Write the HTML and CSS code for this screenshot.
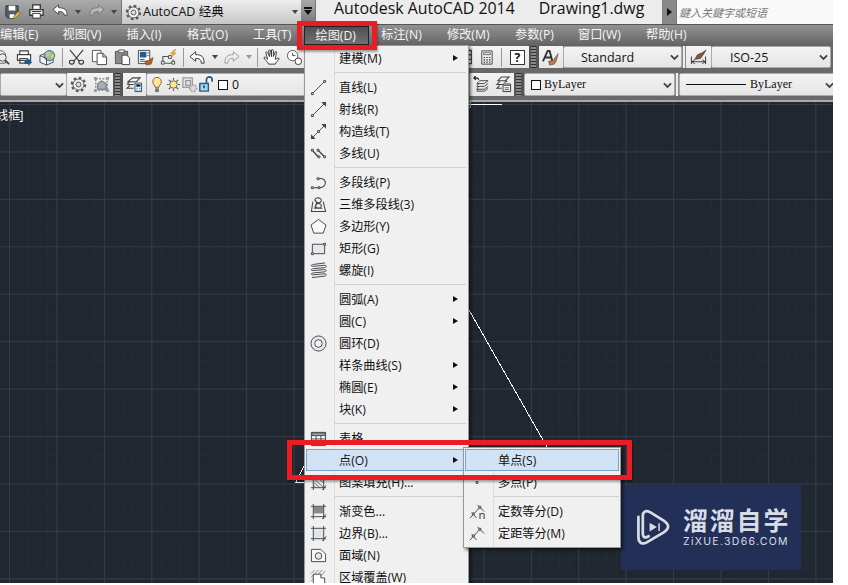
FILE: index.html
```html
<!DOCTYPE html>
<html lang="zh-CN">
<head>
    <meta charset="UTF-8">
    <meta name="viewport" content="width=device-width, initial-scale=1.0">
    <title>Autodesk AutoCAD 2014</title>
    <link rel="stylesheet" href="styles.css">
</head>
<body>
    <div class="app">
        <header class="titlebar">
            <div class="quick">
                <svg class="icon" viewBox="0 0 18 18"><path d="M2 3h13v9l-4 4H4l-2-2z" fill="#555e68" stroke="#303640"/><path d="M5 3h7v5H5zM6 12h5v4H6z" fill="#fff"/><path d="M10 15l5-6 2 2-5 5-3 1z" fill="#f0c64b" stroke="#6b5420" stroke-width=".7"/></svg>
                <svg class="icon" viewBox="0 0 18 18"><path d="M5 6V2h8v4M2 7h14v6H2z" fill="#fff" stroke="#333" stroke-width="1.4"/><path d="M5 11h8v5H5z" fill="#fff" stroke="#333"/><path d="M4 9h10" stroke="#333"/></svg>
                <svg class="icon" viewBox="0 0 18 18"><path d="M1 7l6-5v3c6 0 9 2 9 8h-3c0-3-2-4-6-4v3z" fill="#fff" stroke="#444"/></svg>
                <i class="caret"></i>
                <svg class="icon" viewBox="0 0 18 18"><path d="M17 7l-6-5v3C5 5 2 7 2 13h3c0-3 2-4 6-4v3z" fill="#bbb" stroke="#777"/></svg>
                <i class="caret"></i>
            </div>
            <div class="workspace">
                <svg class="icon" viewBox="0 0 18 18"><circle cx="9" cy="9" r="7" fill="none" stroke="#555" stroke-width="2.4" stroke-dasharray="2.75 2.75"/><circle cx="9" cy="9" r="5.8" fill="#eee" stroke="#555"/><circle cx="9" cy="9" r="2.6" fill="#ddd" stroke="#555"/></svg>
                <span>AutoCAD 经典</span>
                <i class="caret"></i>
            </div>
            <div class="more"><i class="caret"></i></div>
            <div class="caption"><span>Autodesk AutoCAD 2014</span><span>Drawing1.dwg</span></div>
            <div class="expand"><i></i></div>
            <div class="search">鍵入关鍵字或短语</div>
        </header>

        <nav class="menubar">
            <span>编辑(E)</span>
            <span>视图(V)</span>
            <span>插入(I)</span>
            <span>格式(O)</span>
            <span>工具(T)</span>
            <span class="open">绘图(D)</span>
            <span>标注(N)</span>
            <span>修改(M)</span>
            <span>参数(P)</span>
            <span>窗口(W)</span>
            <span>帮助(H)</span>
        </nav>

        <div class="toolbar standard">
            <div class="tools">
                <svg class="icon" viewBox="0 0 18 18"><path d="M1 2h9l3 3v10H1z" fill="#fff" stroke="#555"/><circle cx="10" cy="9" r="4" fill="#e4edf5" stroke="#444"/><path d="M13 12l4 4" stroke="#444" stroke-width="2"/></svg>
                <svg class="icon" viewBox="0 0 18 18"><path d="M4 6V2h9v4M1.5 6h14v6h-14zM4 10h8v5H4z" fill="#fff" stroke="#444" stroke-width="1.2"/><path d="M9 12h4v-2l4 4-4 4v-2H9z" fill="#1b5c92"/></svg>
                <svg class="icon" viewBox="0 0 18 18"><path d="M1 7l7-3 7 3v7l-7 3-7-3z" fill="#eef3f6" stroke="#445"/><circle cx="11" cy="7" r="5.5" fill="#86b8d0" stroke="#3c6b87"/><path d="M8 3l4 1-1 3-3 2zM12 7l3-2 1 3-3 3z" fill="#e8c94c"/><path d="M1 7l7 3v7" fill="none" stroke="#445"/></svg>
                <i class="sep"></i>
                <svg class="icon" viewBox="0 0 18 18"><path d="M2 1l10 12M16 1L6 13" stroke="#444" stroke-width="1.3"/><ellipse cx="4" cy="14" rx="2.5" ry="2" fill="none" stroke="#333" stroke-width="1.1"/><ellipse cx="14" cy="14" rx="2.5" ry="2" fill="none" stroke="#333" stroke-width="1.1"/></svg>
                <svg class="icon" viewBox="0 0 18 18"><path d="M1.5 1.5h9v12h-9z" fill="#fff" stroke="#555"/><path d="M6.5 4.500h6l4 4v8h-10zM12.500 4.500v4h4" fill="#fff" stroke="#444"/></svg>
                <svg class="icon" viewBox="0 0 18 18"><path d="M1.500 2.500h13v13h-13z" fill="#8b8b85" stroke="#555"/><path d="M5 1h6v3H5z" fill="#eee" stroke="#555"/><path d="M8.500 6.500h5l3 3v7h-8z" fill="#fff" stroke="#444"/></svg>
                <svg class="icon" viewBox="0 0 18 18"><path d="M1.500 1.500h12v14h-12z" fill="#fff" stroke="#444"/><path d="M3 3h7v6H3z" fill="#225c92"/><path d="M11 4h1.500M11 7h1.500M3 11h5M3 13h5" stroke="#444"/><path d="M17 9l-4 3-5 1 2 4 5-1 1-3z" fill="#b65e33" stroke="#74401f" stroke-width=".7"/></svg>
                <svg class="icon" viewBox="0 0 18 18"><path d="M3 14V8h7M5 15h9v-4" fill="none" stroke="#555" stroke-width="1.100"/><path d="M1.500 13h3v3h-3zM12.500 13h3v3h-3zM9 7h3v3H9z" fill="#fff" stroke="#444"/><path d="M16 0l-5 5h3l-2 4 5-5h-3l3-4z" fill="#f6b324" stroke="#b77a10" stroke-width=".5"/></svg>
                <i class="sep"></i>
                <svg class="icon" viewBox="0 0 18 18"><path d="M1 8l6-5v3c6 0 9 2 9 9h-3c0-4-2-5-6-5v3z" fill="#fff" stroke="#333"/></svg>
                <i class="caret"></i>
                <svg class="icon" viewBox="0 0 18 18"><path d="M17 8l-6-5v3C5 6 2 8 2 15h3c0-4 2-5 6-5v3z" fill="#eee" stroke="#999"/></svg>
                <i class="caret dim"></i>
                <i class="sep"></i>
                <svg class="icon" viewBox="0 0 18 18"><path d="M6 16c-1-3-5-5-5-7 1-1 2 0 4 2L3 4c0-1 1-2 2 0l2 4-1-6c1-2 2-1 2 0l1 6V1c1-1 2 0 2 1v6l2-5c1-1 2 0 1 2l-1 6c1 0 3-2 4-1 0 2-3 3-4 6z" fill="#fff" stroke="#333"/></svg>
                <svg class="icon" viewBox="0 0 18 18"><circle cx="7" cy="7" r="5.500" fill="#fff" stroke="#555"/><path d="M7 4v3h3" fill="none" stroke="#444"/><circle cx="13" cy="13" r="3.500" fill="#fff" stroke="#333"/></svg>
            </div>
            <div class="tools after-menu">
                <svg class="icon" viewBox="0 0 18 18"><path d="M6.500 1.500h11v14h-11zM6 6h11M6 11h11" fill="#fff" stroke="#444" stroke-width="1.500"/></svg>
                <svg class="icon" viewBox="0 0 18 18"><path d="M4 2h11v14H4z" fill="#eee" stroke="#444"/><path d="M6 4h7v2H6z" fill="#fff" stroke="#444" stroke-width=".8"/><path d="M6 9h8M6 11.500h8M6 14h8" stroke="#333" stroke-width="1.300" stroke-dasharray="1.500 1.300"/></svg>
                <i class="sep"></i>
                <span class="help">?</span>
            </div>
            <i class="grip"></i>
            <div class="tools style">
                <svg class="icon" viewBox="0 0 18 18"><path d="M1 13L6 2h2l3 11M3.500 9h6" fill="none" stroke="#333" stroke-width="2"/><path d="M17 5l-5 7-5 1 1 4 5-1 2-3z" fill="#b77a52" stroke="#704226" stroke-width=".7"/></svg>
            </div>
            <div class="combo text-style">Standard<svg class="chev" viewBox="0 0 10 8"><path d="M1 1l4 4 4-4"/></svg></div>
            <i class="double"></i>
            <div class="tools dimension">
                <svg class="icon" viewBox="0 0 18 18"><path d="M1.500 8v8M16.500 8v8M2 13.500h14M5 11.500l-3 2 3 2M13 11.500l3 2-3 2" fill="none" stroke="#333"/><path d="M17 1l-4 3-5 2-3 5 6-1 3-4z" fill="#82553b" stroke="#50301e" stroke-width=".7"/></svg>
            </div>
            <div class="combo dim-style">ISO-25<svg class="chev" viewBox="0 0 10 8"><path d="M1 1l4 4 4-4"/></svg></div>
        </div>

        <div class="toolbar layers">
            <div class="combo layer-state"><svg class="chev" viewBox="0 0 10 8"><path d="M1 1l4 4 4-4"/></svg></div>
            <div class="tools layer-tools">
                <svg class="icon" viewBox="0 0 18 18"><circle cx="9" cy="9" r="7" fill="none" stroke="#555" stroke-width="2.400" stroke-dasharray="2.750 2.750"/><circle cx="9" cy="9" r="5.800" fill="#eee" stroke="#555"/><circle cx="9" cy="9" r="2.600" fill="#ddd" stroke="#555"/></svg>
                <svg class="icon" viewBox="0 0 18 18"><path d="M3 3h12v12H3z" fill="none" stroke="#555" stroke-dasharray="2 1.500"/><path d="M5 8l4-3 5 3v6H5z" fill="#a3adb8" stroke="#667"/><path d="M1 1h3v3H1zM14 1h3v3h-3zM1 14h3v3H1zM14 14h3v3h-3z" fill="#999"/></svg>
            </div>
            <i class="grip"></i>
            <div class="tools layer-manager">
                <svg class="icon" viewBox="0 0 18 18"><path d="M7 2h8l-4 4H2zM2 9h6M4 6L1 9M4 10l-3 3h7" fill="none" stroke="#444" stroke-width="1.100"/><path d="M9.500 7.500h7v9h-7z" fill="#fff" stroke="#345"/><path d="M11 9h4v2h-4zM11 13h1.500M14 13h1.500M11 15h1.500M14 15h1.500" stroke="#37729f"/></svg>
            </div>
            <div class="combo layer">
                <svg class="icon" viewBox="0 0 18 18"><path d="M6.500 12c0-2-2.500-3-2.500-6 0-6 9-6 9 0 0 3-2.500 4-2.500 6z" fill="#ffe694" stroke="#776238"/><path d="M6.500 13h4v4h-4z" fill="#777"/></svg>
                <svg class="icon" viewBox="0 0 18 18"><path d="M9 2v2M9 14v2M2 9h2M14 9h2M4 4l2 2M12 12l2 2M4 14l2-2M12 6l2-2" stroke="#555" stroke-width="1.200"/><circle cx="9" cy="9" r="4" fill="#ffe694" stroke="#665d43"/></svg>
                <svg class="icon" viewBox="0 0 18 18"><path d="M2 2h10v10H2zM5 5h5v5H5z" fill="#e6e6e6" stroke="#999" stroke-width="1.300"/><circle cx="13" cy="13" r="3.500" fill="#ddd" stroke="#aaa" stroke-width="2" stroke-dasharray="2 1"/></svg>
                <svg class="icon" viewBox="0 0 18 18"><path d="M10 8V4c0-4 6-4 6 0v2" fill="none" stroke="#245d7d" stroke-width="1.800"/><path d="M3 8h9v8H3z" fill="#a9d7ef" stroke="#245d7d" stroke-width="1.500"/><path d="M7.500 10v3" stroke="#245d7d" stroke-width="2"/></svg>
                <i class="swatch"></i>
                <span>0</span>
            </div>
            <div class="tools layer-right">
                <svg class="icon" viewBox="0 0 18 18"><path d="M7 5h9l-4 3H4zM6 8l-2 3h8l4-3M6 11l-2 3h8l4-3M6 14l-2 2h8l4-3" fill="none" stroke="#444"/><path d="M6 4C6 2 4 2 1 2l2-2M1 2l2 2" fill="none" stroke="#222" stroke-width="1.300"/></svg>
                <svg class="icon" viewBox="0 0 18 18"><path d="M7 1h8l-4 4H3zM5 6L2 9h7M5 10l-3 3h5M13 5l-3 2" fill="none" stroke="#444" stroke-width="1.100"/><path d="M8.500 8.500h8v8h-8z" fill="#fff" stroke="#333"/><path d="M9 10h7M10 12.500h5M10 14.500h5" stroke="#375a78"/></svg>
            </div>
            <i class="grip"></i>
            <div class="combo color"><i class="swatch"></i>ByLayer<svg class="chev" viewBox="0 0 10 8"><path d="M1 1l4 4 4-4"/></svg></div>
            <i class="double"></i>
            <div class="combo linetype"><i class="stroke"></i>ByLayer<svg class="chev" viewBox="0 0 10 8"><path d="M1 1l4 4 4-4"/></svg></div>
        </div>

        <main class="canvas">
            <div class="view-label">线框<span>]</span></div>
            <svg class="drawing" viewBox="0 102 833 481" shape-rendering="crispEdges">
                <path d="M469 310L547 447M469 104h33M296 482l8-16M295 482h9" fill="none" stroke="#fff"/>
                <path d="M466.500 102.500h4v5h-4z" fill="none" stroke="#aaa"/>
            </svg>
        </main>

        <div class="watermark">
            <svg viewBox="0 0 36 38"><path d="M2.500 8v21c0 6 4 8 9 5l17-10c6-4 6-8 0-12L14 3C10 1 7 3 7 7v18c0 5 3 5 6 3" fill="none" stroke="#d9dce4" stroke-width="2.800" stroke-linecap="round"/><path d="M14 14l7.500 4.500-7.500 4.500zM23 14.500h1.500v8H23z" fill="#d9dce4"/></svg>
            <div><b>溜溜自学</b><span>ZiXUE.3D66.COM</span></div>
        </div>

        <div class="menu draw-menu">
            <div class="item more-items"><span>建模(M)</span></div>
            <hr>
            <div class="item"><svg class="icon" viewBox="0 0 18 18"><path d="M3 15L15 3"/><path class="node" d="M1.500 14.500h2v2h-2zM14.500 1.500h2v2h-2z"/></svg><span>直线(L)</span></div>
            <div class="item"><svg class="icon" viewBox="0 0 18 18"><path d="M3 15L15 3"/><path class="node" d="M1.500 14.500h2v2h-2z"/><path class="solid" d="M12 1h5v5z"/></svg><span>射线(R)</span></div>
            <div class="item"><svg class="icon" viewBox="0 0 18 18"><path d="M3 15L15 3"/><path class="node" d="M8 8h2v2H8z"/><path class="solid" d="M12 1h5v5zM1 12v5h5z"/></svg><span>构造线(T)</span></div>
            <div class="item"><svg class="icon" viewBox="0 0 18 18"><path d="M2 5l7 8M8 5l8 8" stroke-width="1.400"/><path class="node" d="M1.500 4.500h2v2h-2zM7.500 4.500h2v2h-2zM8.500 11.500h2v2h-2zM14.500 11.500h2v2h-2z"/></svg><span>多线(U)</span></div>
            <hr>
            <div class="item"><svg class="icon" viewBox="0 0 18 18"><path d="M3 14.500h7M9 5c9-2 10 9 1 9.500" stroke-width="1.200"/><path class="node" d="M1.500 13.500h2v2h-2zM8.500 13.500h2v2h-2zM7.500 4h2v2h-2z"/></svg><span>多段线(P)</span></div>
            <div class="item"><svg class="icon" viewBox="0 0 18 18"><path d="M3 6L1.500 16.500h15L14 6M5 5c0-5 8-3 7 0-1 4-7 2-6-1M6 11c0-5 7-3 6 0-1 3-7 2-6-1M7 7l-2 6h8" stroke-width="1.100"/></svg><span>三维多段线(3)</span></div>
            <div class="item"><svg class="icon" viewBox="0 0 18 18"><path d="M9 1.500l8 6L14 16H4L1 7.500z" fill="#f8f8f8"/></svg><span>多边形(Y)</span></div>
            <div class="item"><svg class="icon" viewBox="0 0 18 18"><path d="M2.500 4.500h13v10h-13z" fill="#e5e7e8"/><path class="node" d="M1.500 13.500h2v2h-2zM14.500 3.500h2v2h-2z"/></svg><span>矩形(G)</span></div>
            <div class="item"><svg class="icon" viewBox="0 0 18 18"><path d="M16 1L4 2.500c-4 .5-3 2.500 0 2l11-1c3 0 3 2 0 2.500L4 7c-4 .5-3 2.500 0 2l11-1c3 0 3 2 0 2.500L4 11.500c-4 .5-3 2.500 0 2l11-1c3 0 3 2 0 2.500L2 16.500" stroke-width="1"/></svg><span>螺旋(I)</span></div>
            <hr>
            <div class="item more-items"><span>圆弧(A)</span></div>
            <div class="item more-items"><span>圆(C)</span></div>
            <div class="item"><svg class="icon" viewBox="0 0 18 18"><circle cx="9" cy="9" r="8" fill="#e7e9ec"/><circle cx="9" cy="9" r="4" fill="#f5f5f5"/></svg><span>圆环(D)</span></div>
            <div class="item more-items"><span>样条曲线(S)</span></div>
            <div class="item more-items"><span>椭圆(E)</span></div>
            <div class="item more-items"><span>块(K)</span></div>
            <hr>
            <div class="item"><svg class="icon" viewBox="0 0 18 18"><path d="M1.500 2.500h15v14h-15zM1.500 9.500h15M1.500 13h15M6.500 6v10M11.500 6v10" fill="#fff"/><path d="M2 3h14v3H2z" fill="#9ba1a8"/></svg><span>表格...</span></div>
            <div class="item more-items active"><span>点(O)</span></div>
            <div class="item"><svg class="icon" viewBox="0 0 18 18"><path d="M3.500 1v16M14.500 1v16M1 3.500h16M1 14.500h16M13 17l4-5"/><path d="M4 5l10 9M4 9l6 5M8 4l6 5M4 12l2 2M12 4l2 2" stroke-width=".8"/></svg><span>图案填充(H)...</span></div>
            <hr>
            <div class="item"><svg class="icon" viewBox="0 0 18 18"><path class="solid" d="M4 4h10v7H4z" opacity=".6"/><path d="M3.500 1v16M14.500 1v16M1 3.500h16M1 14.500h16M13 17l4-5"/></svg><span>渐变色...</span></div>
            <div class="item"><svg class="icon" viewBox="0 0 18 18"><path d="M4 4h10v10H4z" fill="#e2e6e8" stroke="none"/><path d="M3.500 1v16M14.500 1v16M1 3.500h16M1 14.500h16M13 17l4-5"/></svg><span>边界(B)...</span></div>
            <div class="item"><svg class="icon" viewBox="0 0 18 18"><path d="M1.500 2.500h10l5 5v8h-15z" fill="#f7f7f7"/><circle cx="9" cy="9.500" r="3.500" fill="#e9e9e9"/></svg><span>面域(N)</span></div>
            <div class="item"><svg class="icon" viewBox="0 0 18 18"><path d="M3.500 5.500h8v4h4v8h-12z" fill="#fff"/><path d="M1 5l4-4M1 9l3-3M5 5l4-4M9 5l4-4M12 7l4-5M1 13l2-2" stroke-width=".6"/></svg><span>区域覆盖(W)</span></div>
        </div>

        <div class="menu point-menu">
            <div class="item active"><span>单点(S)</span></div>
            <div class="item"><svg class="icon" viewBox="0 0 18 18"><path class="node" d="M7.500 8h2v2h-2z"/></svg><span>多点(P)</span></div>
            <hr>
            <div class="item"><svg class="icon" viewBox="0 0 18 18"><path d="M1 16L12 4M3 10l5 6M9 2l7 7"/><path class="node" d="M3.500 10.500h2v2h-2zM10.500 3.500h2v2h-2z"/><text x="10" y="17">n</text></svg><span>定数等分(D)</span></div>
            <div class="item"><svg class="icon" viewBox="0 0 18 18"><path d="M1 16L12 4M3 10l5 6M9 2l7 7"/><path class="node" d="M3.500 10.500h2v2h-2zM10.500 3.500h2v2h-2z"/></svg><span>定距等分(M)</span></div>
        </div>

        <div class="mark mark-menu"></div>
        <div class="mark mark-point"></div>
    </div>
</body>
</html>
```

FILE: styles.css
```css
* {
    box-sizing: border-box;
}
body {
    margin: 0;
    background: #fff;
    font-family: "Open Sans", "Noto Sans CJK SC", sans-serif;
    font-size: 12.2px;
    color: #111;
    overflow: hidden;
}
.app {
    position: relative;
    display: flex;
    flex-direction: column;
    width: 833px;
    height: 583px;
    overflow: hidden;
    background: #696969;
    white-space: nowrap;
}
svg {
    display: block;
    flex: none;
}
.icon {
    width: 17px;
    height: 17px;
}
.caret {
    flex: none;
    border: 3px solid transparent;
    border-top: 4px solid #444;
    border-bottom: 0;
}
.caret.dim {
    border-top-color: #999;
}

/* title bar */
.titlebar {
    display: flex;
    height: 25px;
    flex: none;
    border-bottom: 1px solid #555;
}
.quick {
    width: 121px;
    padding: 0 4px 1px;
    display: flex;
    align-items: center;
    gap: 7px;
    background: linear-gradient(#aaa, #858585);
}
.quick .caret {
    margin: 0 0 0 -1px;
}
.workspace {
    width: 180px;
    display: flex;
    align-items: center;
    padding: 0 3px;
    background: linear-gradient(#eee, #c7c7c7);
    border-left: 1px solid #777;
}
.workspace span {
    flex: 1;
    padding-left: 1px;
    font-size: 12.5px;
    line-height: 20px;
}
.more {
    width: 15px;
    background: linear-gradient(#aaa, #777);
    border-right: 1px solid #777;
    display: flex;
    justify-content: center;
    align-items: center;
}
.more .caret {
    position: relative;
    border-width: 5px 4px 0;
    border-top-color: #111;
}
.more .caret::before {
    content: "";
    position: absolute;
    left: -4px;
    top: -8px;
    width: 8px;
    height: 2px;
    background: #111;
}
.caption {
    width: 346px;
    padding-left: 18px;
    background: #ececec;
    display: flex;
    gap: 24px;
    font-size: 15.9px;
    line-height: 17px;
}
.expand {
    width: 14px;
    background: #888;
    display: flex;
    align-items: center;
    justify-content: center;
}
.expand i {
    border: 4px solid transparent;
    border-left: 5px solid #111;
    border-right: 0;
}
.search {
    flex: 1;
    padding: 3px 0 0 2px;
    border-left: 1px solid #777;
    background: #f9f9f9;
    color: #777;
    font-size: 11px;
    font-style: italic;
    line-height: 20px;
}

/* menu bar */
.menubar {
    display: grid;
    grid-template-columns: 62.5px 64px 60.5px 66px 50px 78px 66px 68px 63px 68px auto;
    height: 21px;
    flex: none;
    line-height: 20px;
    color: #f5f5f5;
    background: linear-gradient(#929292, #626262);
}
.menubar .open {
    margin: 1px 12px 1px 1px;
    padding-left: 10.5px;
    line-height: 17px;
    background: linear-gradient(#505050, #707070);
    border: 1px solid #222;
}

/* toolbars */
.toolbar {
    display: flex;
    align-items: stretch;
    flex: none;
    height: 22px;
}
.standard {
    margin-bottom: 5px;
}
.layers {
    height: 23px;
}
.tools {
    display: flex;
    align-items: center;
    flex: none;
    background: linear-gradient(#f4f4f4, #e5e5e5);
}
.standard .tools:first-child {
    width: 455px;
    padding-left: 0;
    gap: 6px;
}
.standard .tools:first-child .icon:first-child {
    margin-left: -7px;
}
.sep {
    width: 1px;
    height: 19px;
    margin-right: -1px;
    background: #999;
}
.standard .caret {
    margin-right: -1px;
}
.standard .after-menu {
    width: 74px;
    gap: 6px;
}
.help {
    width: 15px;
    height: 15px;
    margin-left: 3px;
    border: 1px solid #333;
    background: #fff;
    font-weight: bold;
    line-height: 13px;
    text-align: center;
}
.grip {
    width: 10px;
    flex: none;
    border: solid #555;
    border-width: 0 3px 0 2px;
    background: repeating-linear-gradient(#333 0 1px, #888 1px 3px);
}
.style {
    width: 24px;
    padding-left: 3px;
}
.dimension {
    width: 25px;
    padding-left: 4px;
}
.combo {
    position: relative;
    flex: none;
    display: flex;
    align-items: center;
    background: linear-gradient(#f3f3f3, #e5e5e5);
    border: 1px solid #aaa;
    border-radius: 2px;
}
.chev {
    width: 9px;
    height: 8px;
    margin: 2px 2px 0 auto;
    fill: none;
    stroke: #444;
    stroke-width: 2;
}
.text-style {
    width: 119px;
    padding-left: 17px;
    font-size: 12.5px;
}
.dim-style {
    width: 120px;
    padding-left: 18px;
    font-size: 12.5px;
}
.double {
    width: 4px;
    flex: none;
    background: #eee;
    border: solid #888;
    border-width: 0 1px;
}
.layer-state {
    width: 67px;
}
.layer-tools {
    width: 46px;
    padding-left: 3px;
    gap: 6px;
}
.layer-manager {
    width: 23px;
    padding-left: 3px;
}
.layer {
    width: 324px;
    padding-left: 2px;
}
.layer .icon {
    margin-right: -1px;
}
.layer .swatch {
    margin: 0 4px 0 5px;
}
.swatch {
    width: 10px;
    height: 10px;
    flex: none;
    border: 1px solid #111;
    background: #fff;
}
.layer-right {
    width: 44px;
    padding-left: 3px;
    gap: 5px;
}
.color,
.linetype {
    font-family: "Liberation Serif", serif;
    font-size: 12px;
}
.color {
    width: 151px;
    padding-left: 6px;
}
.color .swatch {
    margin-right: 3px;
}
.linetype {
    width: 158px;
    padding-left: 6px;
}
.stroke {
    width: 60px;
    height: 1px;
    margin-right: 4px;
    background: #111;
}

/* model space */
.canvas {
    flex: 1;
    margin-top: 4px;
    border-top: 2px solid #aaa;
    background-color: #202731;
    background-image:
        linear-gradient(90deg, #343d47 1px, transparent 1px),
        linear-gradient(#343d47 1px, transparent 1px),
        linear-gradient(90deg, #232b35 1px, transparent 1px),
        linear-gradient(#232b35 1px, transparent 1px);
    background-size: 47.45px 47.45px, 47.45px 47.45px, 9.49px 9.49px, 9.49px 9.49px;
    background-position: 9px 2px;
    position: relative;
}
.view-label {
    margin: 5px 0 0 -4px;
    line-height: 18px;
    color: #fff;
}
.view-label span {
    margin-left: -1px;
}
.drawing {
    position: absolute;
    left: 0;
    top: 0;
    width: 833px;
    height: 481px;
}

/* popup menus */
.menu {
    position: absolute;
    background: linear-gradient(90deg, transparent 29px, #ddd 29px 30px, transparent 30px) #f0f0f0;
    border: 1px solid #999;
    box-shadow: 2px 2px 3px #0008;
}
.draw-menu {
    left: 304px;
    top: 45px;
    width: 165px;
    height: 545px;
    padding: 1px 2px 0 1px;
}
.point-menu {
    left: 463px;
    top: 447px;
    width: 158px;
    height: 101px;
    padding: 1px 1px 0;
}
.item {
    display: flex;
    align-items: center;
    height: 22px;
    padding-left: 33px;
    position: relative;
}
.item .icon {
    margin: 0 12px 0 -29px;
    fill: none;
    stroke: #3f454b;
}
.icon .solid {
    fill: #3f454b;
    stroke: none;
}
.icon .node {
    fill: #f4f4f4;
}
.icon text {
    fill: #333;
    stroke: none;
    font-size: 12px;
}
.more-items::after {
    content: "";
    margin: 0 8px 0 auto;
    border: 3.5px solid transparent;
    border-left: 5px solid #111;
    border-right: 0;
}
.item.active {
    background: #d1e3f4;
    box-shadow: inset 0 0 0 1px #79a3cf;
}
.menu hr {
    height: 1px;
    margin: 3px 0 3px 29px;
    border: 0;
    background: #d0d0d0;
}

/* red callouts */
.mark {
    position: absolute;
    border: 5px solid #ed1c24;
    box-shadow: 1px 2px 2px #0005;
}
.mark-menu {
    left: 297px;
    top: 21px;
    width: 80px;
    height: 29px;
}
.mark-point {
    left: 287px;
    top: 440px;
    width: 345px;
    height: 40px;
}

.watermark {
    position: absolute;
    left: 621px;
    top: 485px;
    width: 180px;
    height: 85px;
    padding-left: 15px;
    display: flex;
    align-items: center;
    gap: 12px;
    background: #223058;
    color: #d9dce4;
}
.watermark svg {
    width: 35px;
    height: 37px;
}
.watermark b {
    display: block;
    font-size: 25px;
    letter-spacing: 1.8px;
    line-height: 29px;
}
.watermark span {
    display: block;
    font-family: Inter, sans-serif;
    font-size: 10.5px;
    letter-spacing: 1.3px;
    line-height: 14px;
}
```
